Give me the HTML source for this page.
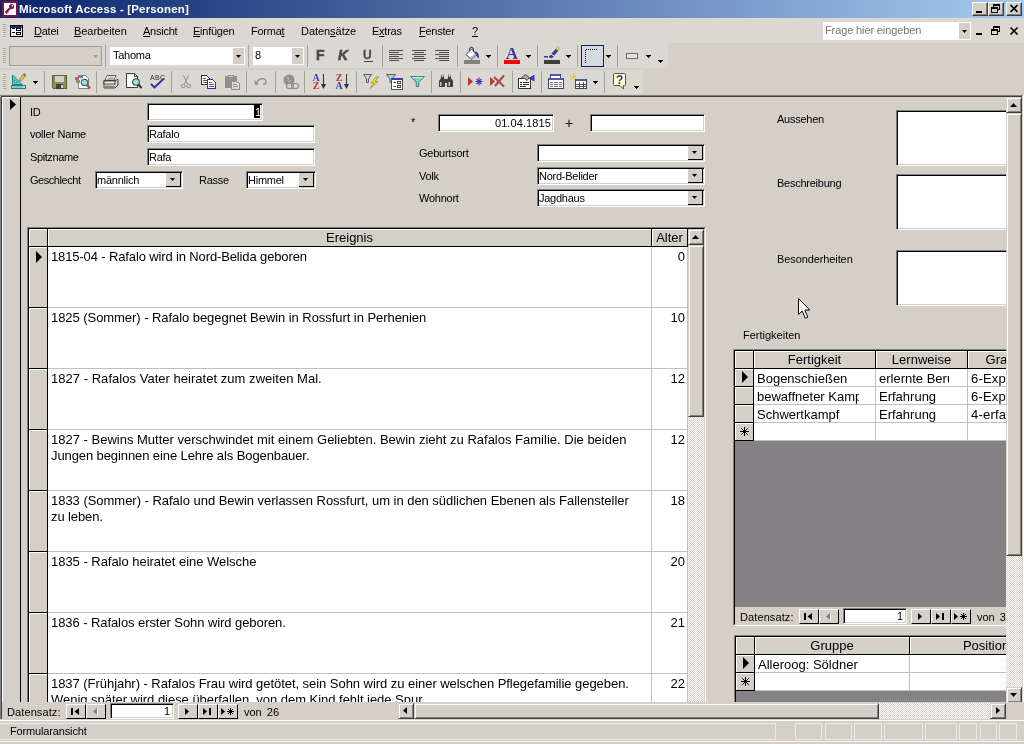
<!DOCTYPE html><html lang="de"><head><meta charset="utf-8"><title>Microsoft Access - [Personen]</title><style>
*{box-sizing:border-box;margin:0;padding:0}
html,body{width:1024px;height:744px;overflow:hidden;background:#d4d0c8}
body{position:relative;font-family:"Liberation Sans","DejaVu Sans",sans-serif;font-size:11px;color:#000;letter-spacing:-0.25px}
.a{position:absolute}
.t{position:absolute;white-space:nowrap;line-height:13px;height:13px}
.ar{font-size:13px;letter-spacing:0;line-height:15px;height:15px}
.sunk{position:absolute;background:#fff;border:1px solid;border-color:#808080 #fff #fff #808080;box-shadow:inset 1px 1px 0 #000,inset -1px -1px 0 #d4d0c8}
.sunk1{position:absolute;background:#fff;border:1px solid;border-color:#808080 #fff #fff #808080}
.btn{position:absolute;background:#d4d0c8;border:1px solid;border-color:#fff #404040 #404040 #fff;box-shadow:inset -1px -1px 0 #808080}
.cbtn{position:absolute;background:#d4d0c8;border-right:1px solid #000;border-bottom:1px solid #000}
.nbtn{position:absolute;background:#d4d0c8;border:1px solid;border-color:#fff #000 #000 #fff}
.sbtn{position:absolute;background:#d4d0c8;border:1px solid;border-color:#d4d0c8 #404040 #404040 #d4d0c8;box-shadow:inset 1px 1px 0 #fff,inset -1px -1px 0 #808080}
.chk{position:absolute;background:repeating-conic-gradient(#fff 0 25%,#d4d0c8 0 50%) 0 0/2px 2px}
.sep{position:absolute;width:2px;border-left:1px solid #808080;border-right:1px solid #fff}
.hdr{position:absolute;background:#d4d0c8;text-align:center;white-space:nowrap;overflow:hidden;padding-top:1px}
.u{text-decoration:underline}
svg{position:absolute;overflow:visible}
</style></head><body><div id="w" style="position:absolute;left:0;top:0;width:1024px;height:744px;will-change:transform">
<div class="a" style="left:0px;top:0px;width:1024px;height:18px;background:linear-gradient(90deg,#0a246a,#a6caf0)"></div>
<svg style="left:2px;top:1px" width="16" height="16" viewBox="0 0 16 16"><rect width="16" height="16" fill="#7a1246"/><rect x="2" y="2" width="12" height="12" fill="#fff"/><circle cx="9.6" cy="5.6" r="2.6" fill="#8a1450"/><circle cx="10.4" cy="4.8" r="0.8" fill="#fff"/><path d="M8 7.2 L3.6 11.6" stroke="#8a1450" stroke-width="2.2" fill="none"/><path d="M5.2 10.4 L6.4 11.6 M3.8 11.6 L5 12.6" stroke="#8a1450" stroke-width="1.2" fill="none"/></svg>
<div class="t " style="left:19px;top:2px;color:#fff;font-weight:bold;font-size:11.5px;letter-spacing:0.17px;line-height:14px;height:14px">Microsoft Access - [Personen]</div>
<div class="btn" style="left:972px;top:2px;width:16px;height:14px;"></div>
<div class="a" style="left:976px;top:11px;width:6px;height:2px;background:#000"></div>
<div class="btn" style="left:988px;top:2px;width:16px;height:14px;"></div>
<svg style="left:991px;top:4px" width="10" height="10" viewBox="0 0 10 10" shape-rendering="crispEdges"><path d="M2.5 3V0.5H8.5V5.5H6" fill="none" stroke="#000"/><path d="M2 1H9" stroke="#000"/><rect x="0.5" y="3.5" width="6" height="5" fill="none" stroke="#000"/><path d="M0 4H7" stroke="#000"/></svg>
<div class="btn" style="left:1006px;top:2px;width:16px;height:14px;"></div>
<svg style="left:1010px;top:5px" width="8" height="7" viewBox="0 0 8 7"><path d="M0.5 0 L7.5 7 M7.5 0 L0.5 7" stroke="#000" stroke-width="1.7"/></svg>
<div class="a" style="left:0px;top:18px;width:1024px;height:25px;background:#dbd8d1"></div>
<div class="a" style="left:3px;top:24px;width:3px;height:14px;background:repeating-linear-gradient(180deg,#a8a49c 0 1px,#e6e3dd 1px 2px)"></div>
<svg style="left:10px;top:25px" width="13" height="12" viewBox="0 0 13 12" shape-rendering="crispEdges"><rect x="0.5" y="0.5" width="12" height="11" fill="#f0f0f0" stroke="#000"/><rect x="1" y="1" width="11" height="2" fill="#1a2a80"/><rect x="2" y="3" width="3" height="1" fill="#000"/><rect x="2" y="7" width="3" height="1" fill="#000"/><rect x="6.5" y="3.5" width="4" height="2" fill="#fff" stroke="#000"/><rect x="6.5" y="7.5" width="4" height="2" fill="#fff" stroke="#000"/></svg>
<div class="t " style="left:34px;top:25px;"><span class="u">D</span>atei</div>
<div class="t " style="left:74px;top:25px;"><span style="letter-spacing:-0.05px"><span class="u">B</span>earbeiten</span></div>
<div class="t " style="left:143px;top:25px;"><span class="u">A</span>nsicht</div>
<div class="t " style="left:193px;top:25px;"><span class="u">E</span>infügen</div>
<div class="t " style="left:251px;top:25px;">Forma<span class="u">t</span></div>
<div class="t " style="left:301px;top:25px;"><span style="letter-spacing:-0.05px">Daten<span class="u">s</span>ätze</span></div>
<div class="t " style="left:372px;top:25px;">E<span class="u">x</span>tras</div>
<div class="t " style="left:419px;top:25px;"><span class="u">F</span>enster</div>
<div class="t " style="left:472px;top:25px;"><span class="u">?</span></div>
<div class="a" style="left:823px;top:22px;width:148px;height:18px;background:#fff"></div>
<div class="t " style="left:825px;top:24px;color:#777;letter-spacing:-0.12px">Frage hier eingeben</div>
<div class="a" style="left:959px;top:23px;width:11px;height:16px;background:#d4d0c8"></div>
<svg style="left:962px;top:30px" width="5" height="5"><polygon points="0,0 5,0 2.5,3" fill="#000"/></svg>
<div class="a" style="left:976px;top:33px;width:6px;height:2px;background:#000"></div>
<svg style="left:991px;top:26px" width="10" height="10" viewBox="0 0 10 10" shape-rendering="crispEdges"><path d="M2.5 3V0.5H8.5V5.5H6" fill="none" stroke="#000"/><path d="M2 1H9" stroke="#000"/><rect x="0.5" y="3.5" width="6" height="5" fill="none" stroke="#000"/><path d="M0 4H7" stroke="#000"/></svg>
<svg style="left:1010px;top:27px" width="8" height="8" viewBox="0 0 8 8"><path d="M0.5 0.5 L7.5 7.5 M7.5 0.5 L0.5 7.5" stroke="#000" stroke-width="1.7"/></svg>
<div class="a" style="left:0px;top:43px;width:668px;height:25px;background:#dbd8d1"></div>
<div class="a" style="left:0px;top:70px;width:643px;height:24px;background:#dbd8d1"></div>
<div class="a" style="left:3px;top:48px;width:3px;height:15px;background:repeating-linear-gradient(180deg,#a8a49c 0 1px,#e6e3dd 1px 2px)"></div>
<div class="a" style="left:3px;top:74px;width:3px;height:15px;background:repeating-linear-gradient(180deg,#a8a49c 0 1px,#e6e3dd 1px 2px)"></div>
<div class="a" style="left:9px;top:46px;width:93px;height:20px;background:#d4d0c8;border:1px solid #9e9c96"></div>
<svg style="left:93px;top:55px" width="5" height="5"><polygon points="0,0 5,0 2.5,3" fill="#9d9a93"/></svg>
<div class="a" style="left:110px;top:47px;width:135px;height:18px;background:#fff"></div>
<div class="t " style="left:113px;top:49px;">Tahoma</div>
<div class="a" style="left:233px;top:48px;width:11px;height:16px;background:#d4d0c8"></div>
<svg style="left:236px;top:55px" width="5" height="5"><polygon points="0,0 5,0 2.5,3" fill="#000"/></svg>
<div class="a" style="left:253px;top:47px;width:51px;height:18px;background:#fff"></div>
<div class="t " style="left:255px;top:49px;">8</div>
<div class="a" style="left:292px;top:48px;width:11px;height:16px;background:#d4d0c8"></div>
<svg style="left:295px;top:55px" width="5" height="5"><polygon points="0,0 5,0 2.5,3" fill="#000"/></svg>
<div class="a" style="left:105px;top:45px;width:1px;height:22px;background:#a6a398"></div>
<div class="a" style="left:248px;top:45px;width:1px;height:22px;background:#a6a398"></div>
<div class="a" style="left:307px;top:45px;width:1px;height:22px;background:#a6a398"></div>
<div class="a" style="left:382px;top:45px;width:1px;height:22px;background:#a6a398"></div>
<div class="a" style="left:457px;top:45px;width:1px;height:22px;background:#a6a398"></div>
<div class="a" style="left:497px;top:45px;width:1px;height:22px;background:#a6a398"></div>
<div class="a" style="left:537px;top:45px;width:1px;height:22px;background:#a6a398"></div>
<div class="a" style="left:577px;top:45px;width:1px;height:22px;background:#a6a398"></div>
<div class="a" style="left:617px;top:45px;width:1px;height:22px;background:#a6a398"></div>
<div class="a" style="left:44px;top:71px;width:1px;height:22px;background:#a6a398"></div>
<div class="a" style="left:96px;top:71px;width:1px;height:22px;background:#a6a398"></div>
<div class="a" style="left:171px;top:71px;width:1px;height:22px;background:#a6a398"></div>
<div class="a" style="left:246px;top:71px;width:1px;height:22px;background:#a6a398"></div>
<div class="a" style="left:275px;top:71px;width:1px;height:22px;background:#a6a398"></div>
<div class="a" style="left:304px;top:71px;width:1px;height:22px;background:#a6a398"></div>
<div class="a" style="left:356px;top:71px;width:1px;height:22px;background:#a6a398"></div>
<div class="a" style="left:431px;top:71px;width:1px;height:22px;background:#a6a398"></div>
<div class="a" style="left:460px;top:71px;width:1px;height:22px;background:#a6a398"></div>
<div class="a" style="left:512px;top:71px;width:1px;height:22px;background:#a6a398"></div>
<div class="a" style="left:541px;top:71px;width:1px;height:22px;background:#a6a398"></div>
<div class="a" style="left:604px;top:71px;width:1px;height:22px;background:#a6a398"></div>
<div class="t" style="left:316px;top:48px;letter-spacing:0;font-weight:bold;font-size:14px;line-height:15px;height:15px;color:#4d4d4d;-webkit-text-stroke:0.6px #4d4d4d">F</div>
<div class="t" style="left:338px;top:48px;letter-spacing:0;font-weight:bold;font-style:italic;font-size:14px;line-height:15px;height:15px;color:#4d4d4d;-webkit-text-stroke:0.6px #4d4d4d">K</div>
<div class="t" style="left:363px;top:48px;letter-spacing:0;font-weight:bold;font-size:12px;line-height:15px;height:15px;color:#4d4d4d;-webkit-text-stroke:0.3px #4d4d4d">U</div>
<svg style="left:364px;top:61px" width="9" height="1" viewBox="0 0 9 1" shape-rendering="crispEdges"><rect width="9" height="1" fill="#4d4d4d"/></svg>
<svg style="left:389px;top:50px" width="14" height="11" viewBox="0 0 14 11" shape-rendering="crispEdges"><rect x="0" y="0" width="14" height="1" fill="#4d4d4d"/><rect x="0" y="2" width="10" height="1" fill="#4d4d4d"/><rect x="0" y="4" width="14" height="1" fill="#4d4d4d"/><rect x="0" y="6" width="10" height="1" fill="#4d4d4d"/><rect x="0" y="8" width="14" height="1" fill="#4d4d4d"/><rect x="0" y="10" width="10" height="1" fill="#4d4d4d"/></svg>
<svg style="left:412px;top:50px" width="14" height="11" viewBox="0 0 14 11" shape-rendering="crispEdges"><rect x="0" y="0" width="14" height="1" fill="#4d4d4d"/><rect x="2" y="2" width="10" height="1" fill="#4d4d4d"/><rect x="0" y="4" width="14" height="1" fill="#4d4d4d"/><rect x="2" y="6" width="10" height="1" fill="#4d4d4d"/><rect x="0" y="8" width="14" height="1" fill="#4d4d4d"/><rect x="2" y="10" width="10" height="1" fill="#4d4d4d"/></svg>
<svg style="left:435px;top:50px" width="14" height="11" viewBox="0 0 14 11" shape-rendering="crispEdges"><rect x="0" y="0" width="14" height="1" fill="#4d4d4d"/><rect x="4" y="2" width="10" height="1" fill="#4d4d4d"/><rect x="0" y="4" width="14" height="1" fill="#4d4d4d"/><rect x="4" y="6" width="10" height="1" fill="#4d4d4d"/><rect x="0" y="8" width="14" height="1" fill="#4d4d4d"/><rect x="4" y="10" width="10" height="1" fill="#4d4d4d"/></svg>
<svg style="left:464px;top:47px" width="16" height="17" viewBox="0 0 16 17"><rect x="0" y="13" width="16" height="4" fill="#808080"/>
<path d="M2 7.5 L7.5 2 L13 7.5 L7.5 12.5 Z" fill="#fff" stroke="#404040" stroke-width="1"/>
<path d="M7.5 12.5 L13 7.5 L10 7.5 L6 11Z" fill="#b0b0b0"/>
<path d="M5.5 4 C5 -1 10 -1 9.5 5" fill="none" stroke="#3a3aa0" stroke-width="1.2"/>
<path d="M10.5 4.5 C14.5 4.5 15 8 15 11.5 C12.5 10.5 12.5 7.5 11 7Z" fill="#3a3aa0"/></svg>
<svg style="left:486px;top:55px" width="5" height="3" viewBox="0 0 5 3" shape-rendering="crispEdges"><path d="M0 0H5V1H4V2H3V3H2V2H1V1H0Z" fill="#000"/></svg>
<div class="t" style="left:504px;top:45px;width:16px;text-align:center;letter-spacing:0;font-family:'Liberation Serif',serif;font-weight:bold;font-size:17px;line-height:17px;height:17px;color:#3a3aa0">A</div>
<svg style="left:504px;top:60px" width="16" height="4" viewBox="0 0 16 4" shape-rendering="crispEdges"><rect width="16" height="4" fill="#ff0000"/></svg>
<svg style="left:526px;top:55px" width="5" height="3" viewBox="0 0 5 3" shape-rendering="crispEdges"><path d="M0 0H5V1H4V2H3V3H2V2H1V1H0Z" fill="#000"/></svg>
<svg style="left:544px;top:46px" width="16" height="18" viewBox="0 0 16 18"><rect x="0" y="14" width="16" height="4" fill="#404040"/>
<path d="M5 11 L12 3 L14 4.5 L8 12 Z" fill="#3a3aa0" stroke="#26266e" stroke-width="0.6"/>
<path d="M12 3 L14 0.5 L15.5 2 L14 4.5Z" fill="#f0e040" stroke="#8a8420" stroke-width="0.5"/>
<path d="M7 8 L10 10" stroke="#fff" stroke-width="1"/>
<rect x="0" y="10" width="4" height="1.5" fill="#3a3aa0"/></svg>
<svg style="left:566px;top:55px" width="5" height="3" viewBox="0 0 5 3" shape-rendering="crispEdges"><path d="M0 0H5V1H4V2H3V3H2V2H1V1H0Z" fill="#000"/></svg>
<svg style="left:581px;top:45px" width="23" height="22" viewBox="0 0 23 22" shape-rendering="crispEdges"><rect x="0.5" y="0.5" width="22" height="21" fill="#d6d8e2" stroke="#0a246a"/>
<path d="M4.5 4.5H17" stroke="#000" stroke-dasharray="1 1"/><path d="M4.5 4.5V18" stroke="#000" stroke-dasharray="1 1"/></svg>
<svg style="left:606px;top:55px" width="5" height="3" viewBox="0 0 5 3" shape-rendering="crispEdges"><path d="M0 0H5V1H4V2H3V3H2V2H1V1H0Z" fill="#000"/></svg>
<svg style="left:626px;top:53px" width="12" height="6" viewBox="0 0 12 6" shape-rendering="crispEdges"><rect x="0.5" y="0.5" width="11" height="5" fill="#e4e2dc" stroke="#707070"/></svg>
<svg style="left:646px;top:55px" width="5" height="3" viewBox="0 0 5 3" shape-rendering="crispEdges"><path d="M0 0H5V1H4V2H3V3H2V2H1V1H0Z" fill="#000"/></svg>
<svg style="left:658px;top:60px" width="5" height="3" viewBox="0 0 5 3" shape-rendering="crispEdges"><path d="M0 0H5V1H4V2H3V3H2V2H1V1H0Z" fill="#000"/></svg>
<svg style="left:11px;top:73px" width="16" height="16" viewBox="0 0 16 16"><path d="M1.5 11.5 L1.5 2 L11 11.5 Z" fill="#58d0d0" stroke="#188080"/>
<path d="M3.5 9.5 L3.5 6.5 L6.5 9.5 Z" fill="#dbd8d1" stroke="#208888" stroke-width="0.7"/>
<rect x="0.5" y="12.5" width="14" height="3" fill="#b8e4e4" stroke="#188080"/>
<path d="M3 13v2M5 13v2M7 13v2M9 13v2M11 13v2" stroke="#208888" stroke-width="0.6"/>
<path d="M8 7 L12 1.5 L14.5 3 L10 8 Z" fill="#e8c840" stroke="#806820" stroke-width="0.7"/>
<path d="M12 1.5 L13 0.3 L15.2 1.8 L14.5 3Z" fill="#606060"/></svg>
<svg style="left:33px;top:81px" width="5" height="3" viewBox="0 0 5 3" shape-rendering="crispEdges"><path d="M0 0H5V1H4V2H3V3H2V2H1V1H0Z" fill="#000"/></svg>
<svg style="left:52px;top:75px" width="15" height="14" viewBox="0 0 15 14" shape-rendering="crispEdges"><path d="M0.5 0.5H14.5V13.5H1.5L0.5 12.5Z" fill="#8a9050" stroke="#5a6030"/>
<rect x="3" y="1" width="9" height="6" fill="#d4d0c8"/>
<rect x="4" y="9" width="7" height="4.5" fill="#404040"/><rect x="8.5" y="10" width="2" height="3" fill="#d4d0c8"/></svg>
<svg style="left:75px;top:74px" width="16" height="17" viewBox="0 0 16 17" shape-rendering="crispEdges"><path d="M3.5 1.5H10.5L13.5 4.5V14.5H3.5Z" fill="#fff" stroke="#808080"/>
<rect x="0" y="3" width="4" height="3" fill="#c06070"/><rect x="4" y="1" width="4" height="3" fill="#6080c0"/><rect x="1" y="6" width="4" height="3" fill="#909060"/><rect x="5" y="4" width="3" height="3" fill="#e8e0a0"/>
<circle cx="9.5" cy="8.5" r="3.2" fill="#a0e0e0" stroke="#406080" stroke-width="1.2" shape-rendering="auto"/>
<path d="M12 11 L15 14.5" stroke="#d03030" stroke-width="2" shape-rendering="auto"/></svg>
<svg style="left:103px;top:75px" width="16" height="14" viewBox="0 0 16 14"><path d="M4 0.5H13L11 5H2Z" fill="#fff" stroke="#606060"/>
<path d="M5 2H11M4.5 3.5H10" stroke="#808080" stroke-width="0.7"/>
<path d="M1 5.5H12L15 4.5V10L12 13H1Z" fill="#d4d0c8" stroke="#404040"/>
<rect x="1" y="6" width="11" height="3" fill="#f4f4f4" stroke="#404040"/>
<rect x="2" y="9.5" width="9" height="1" fill="#c8c040"/>
<rect x="1.5" y="11" width="10" height="2" fill="#808080"/></svg>
<svg style="left:126px;top:73px" width="17" height="17" viewBox="0 0 17 17" shape-rendering="crispEdges"><path d="M0.5 0.5H8.5L11.5 3.5V14.5H0.5Z" fill="#fff" stroke="#404040"/>
<path d="M8.5 0.5V3.5H11.5" fill="none" stroke="#404040"/>
<circle cx="10" cy="9" r="3.3" fill="#a0e0d8" stroke="#404040" stroke-width="1.1" shape-rendering="auto"/>
<path d="M12.5 11.5 L15.5 15" stroke="#303030" stroke-width="2" shape-rendering="auto"/></svg>
<div class="t" style="left:150px;top:74px;letter-spacing:0;font-size:7px;font-weight:normal;line-height:8px;height:8px;color:#303030;letter-spacing:0.3px">ABC</div>
<svg style="left:150px;top:78px" width="15" height="11" viewBox="0 0 15 11"><path d="M1 6 L4.5 9.5 L14 0.5" fill="none" stroke="#3030a0" stroke-width="1.8"/></svg>
<svg style="left:181px;top:75px" width="10" height="14" viewBox="0 0 10 14"><path d="M2.5 0.5 L6.5 9 M7.5 0.5 L3.5 9" stroke="#909088" stroke-width="1" fill="none"/>
<circle cx="2.3" cy="11" r="1.8" fill="none" stroke="#909088"/><circle cx="7.7" cy="11" r="1.8" fill="none" stroke="#909088"/></svg>
<svg style="left:201px;top:75px" width="16" height="14" viewBox="0 0 16 14" shape-rendering="crispEdges"><path d="M0.5 0.5H5.5L8.5 3.5V9.5H0.5Z" fill="#fff" stroke="#303030"/>
<path d="M2 3H5M2 5H7M2 7H7" stroke="#303030" stroke-width="0.8"/>
<path d="M6.5 4.5H11.5L14.5 7.5V13.5H6.5Z" fill="#fff" stroke="#3030a0"/>
<path d="M8 7H11M8 9H13M8 11H13" stroke="#3030a0" stroke-width="0.8"/></svg>
<svg style="left:224px;top:74px" width="16" height="16" viewBox="0 0 16 16" shape-rendering="crispEdges"><rect x="1" y="2" width="12" height="12" rx="1" fill="#909088"/>
<rect x="4" y="0.5" width="6" height="3" fill="#909088"/><rect x="5" y="2" width="4" height="1" fill="#d4d0c8"/>
<path d="M7.5 7.5H12.5L15.5 9.5V15.5H7.5Z" fill="#dbd8d1" stroke="#909088"/>
<path d="M9 10.5H13M9 12.5H14" stroke="#909088" stroke-width="0.9"/></svg>
<svg style="left:254px;top:77px" width="14" height="9" viewBox="0 0 14 9"><path d="M3 6.5 C3 1 12 0 12 4.5 C12 6.5 10.5 7.5 9 7.5" fill="none" stroke="#909088" stroke-width="1.3"/>
<path d="M0.5 3 L5 7.5 L0.8 8Z" fill="#909088"/></svg>
<svg style="left:282px;top:74px" width="17" height="16" viewBox="0 0 17 16"><circle cx="7" cy="6" r="5.5" fill="#909088"/>
<path d="M4 3 C6 2 7 4 6 6 C5 8 8 8 9 6" fill="none" stroke="#c8c4bc" stroke-width="1"/>
<rect x="4.5" y="9.5" width="7" height="5" rx="2.5" fill="#d4d0c8" stroke="#909088" stroke-width="1.2"/>
<rect x="9.5" y="9.5" width="7" height="5" rx="2.5" fill="none" stroke="#909088" stroke-width="1.2"/></svg>
<div class="t" style="left:312px;top:73px;width:8px;text-align:center;letter-spacing:0;font-family:'Liberation Serif',serif;font-weight:bold;font-size:10px;line-height:9px;height:9px;color:#3838b0">A</div>
<div class="t" style="left:312px;top:81px;width:8px;text-align:center;letter-spacing:0;font-family:'Liberation Serif',serif;font-weight:bold;font-size:10px;line-height:9px;height:9px;color:#c03030">Z</div>
<svg style="left:321px;top:74px" width="5" height="15" viewBox="0 0 5 15"><rect x="2" y="0" width="1" height="12" fill="#303030"/><path d="M0 10H5L2.5 15Z" fill="#303030"/></svg>
<div class="t" style="left:335px;top:73px;width:8px;text-align:center;letter-spacing:0;font-family:'Liberation Serif',serif;font-weight:bold;font-size:10px;line-height:9px;height:9px;color:#c03030">Z</div>
<div class="t" style="left:335px;top:81px;width:8px;text-align:center;letter-spacing:0;font-family:'Liberation Serif',serif;font-weight:bold;font-size:10px;line-height:9px;height:9px;color:#3838b0">A</div>
<svg style="left:344px;top:74px" width="5" height="15" viewBox="0 0 5 15"><rect x="2" y="0" width="1" height="12" fill="#303030"/><path d="M0 10H5L2.5 15Z" fill="#303030"/></svg>
<svg style="left:363px;top:74px" width="16" height="15" viewBox="0 0 16 15"><path d="M0.5 0.5H8.5L5.5 4.95V8.5H3.5V4.95Z" fill="#a8d8d8" stroke="#505050" stroke-width="0.9"/><path d="M13 3 L8 9 H11 L7 14.5 L15 7.5 H12 L15.5 3Z" fill="#f0e820" stroke="#807810" stroke-width="0.6"/></svg>
<svg style="left:386px;top:74px" width="17" height="16" viewBox="0 0 17 16"><path d="M0.5 0.5H9.5L6.0 4.95V8.5H4.0V4.95Z" fill="#a8d8d8" stroke="#505050" stroke-width="0.9"/><rect x="5.5" y="4.5" width="11" height="11" fill="#fff" stroke="#505050"/>
<rect x="6" y="4" width="10" height="2" fill="#3838b0"/>
<rect x="11.5" y="7.5" width="3" height="2" fill="none" stroke="#303030" stroke-width="0.9"/><rect x="11.5" y="11.5" width="3" height="2" fill="none" stroke="#303030" stroke-width="0.9"/>
<path d="M7.5 8.5H10M7.5 12.5H10" stroke="#303030" stroke-width="0.9"/></svg>
<svg style="left:410px;top:76px" width="15" height="11" viewBox="0 0 15 11"><path d="M0.5 0.5H14.5L8.8 6V10.5H6.2V6Z" fill="#80d0c8" stroke="#407070" stroke-width="0.9"/><path d="M2 1.5H13" stroke="#d8f4f0" stroke-width="1"/></svg>
<svg style="left:438px;top:75px" width="16" height="13" viewBox="0 0 16 13"><path d="M3 1H6V3L7 5V12H1V6L3 3Z" fill="#404040"/><path d="M10 1H13V3L15 6V12H9V5L10 3Z" fill="#404040"/>
<rect x="6.5" y="4" width="3" height="4" fill="#404040"/>
<rect x="2" y="7" width="1.5" height="4" fill="#c8c8c8"/><rect x="10.5" y="7" width="1.5" height="4" fill="#c8c8c8"/>
<rect x="3.5" y="0" width="2" height="2" fill="#fff" stroke="#404040" stroke-width="0.5"/><rect x="10.5" y="0" width="2" height="2" fill="#fff" stroke="#404040" stroke-width="0.5"/></svg>
<svg style="left:468px;top:77px" width="15" height="9" viewBox="0 0 15 9"><path d="M0 0L5 4.5L0 9Z" fill="#b83838"/><path d="M11 0.5V8.5M7.5 4.5H14.5M8.5 2L13.5 7M13.5 2L8.5 7" stroke="#3838c0" stroke-width="1.1"/></svg>
<svg style="left:490px;top:75px" width="15" height="12" viewBox="0 0 15 12"><path d="M0 2L5 6.5L0 11Z" fill="#b83838"/><path d="M4 2 L14 11.5 M14 0.5 L5 11" stroke="#a04848" stroke-width="2"/></svg>
<svg style="left:518px;top:74px" width="18" height="16" viewBox="0 0 18 16" shape-rendering="crispEdges"><rect x="0.5" y="4.5" width="12" height="10" fill="#fff" stroke="#303030"/>
<path d="M2 8.5H4M5 8.5H11M2 10.5H4M5 10.5H11M2 12.5H8" stroke="#303030" stroke-width="1"/>
<path d="M2.5 4.5 L7.5 0.5 L11.5 3.5 L9 6.5 L6.5 4.5Z" fill="#a8a8a8" stroke="#303030" stroke-width="0.8" shape-rendering="auto"/>
<path d="M12 3.2 L16.5 0.5 V7.5 L12 5.2Z" fill="#3838b0" shape-rendering="auto"/></svg>
<svg style="left:548px;top:73px" width="17" height="16" viewBox="0 0 17 16" shape-rendering="crispEdges"><rect x="2.5" y="1.5" width="10" height="7" fill="#fff" stroke="#404068"/><rect x="3" y="1" width="9" height="2" fill="#5858a8"/>
<rect x="0.5" y="5.5" width="15" height="10" fill="#fff" stroke="#404068"/><rect x="1" y="5" width="14" height="2" fill="#5858a8"/>
<path d="M2 9.5H5M6 9.5H10M11 9.5H14M2 11.5H5M6 11.5H10M11 11.5H14M2 13.5H5M6 13.5H10M11 13.5H14" stroke="#707070" stroke-width="1"/></svg>
<svg style="left:570px;top:73px" width="17" height="16" viewBox="0 0 17 16" shape-rendering="crispEdges"><path d="M3.5 0 V8 M0 4 H7 M1 1.5 L6 6.5 M6 1.5 L1 6.5" stroke="#e0d020" stroke-width="0.8" shape-rendering="auto"/>
<rect x="5.5" y="6.5" width="11" height="9" fill="#fff" stroke="#404068"/><rect x="6" y="6" width="10" height="2" fill="#5858a8"/>
<path d="M9.5 9V15M13 9V15M6 11.5H16M6 13.5H16" stroke="#404040" stroke-width="0.9"/></svg>
<svg style="left:593px;top:81px" width="5" height="3" viewBox="0 0 5 3" shape-rendering="crispEdges"><path d="M0 0H5V1H4V2H3V3H2V2H1V1H0Z" fill="#000"/></svg>
<svg style="left:613px;top:73px" width="14" height="17" viewBox="0 0 14 17" shape-rendering="crispEdges"><path d="M1.5 0.5H11.5Q12.5 0.5 12.5 1.5V11.5Q12.5 12.5 11.5 12.5H10.5L10.5 16L7 12.5H1.5Q0.5 12.5 0.5 11.5V1.5Q0.5 0.5 1.5 0.5Z" fill="#ffffd0" stroke="#505050" shape-rendering="auto"/></svg>
<div class="t" style="left:616px;top:74px;letter-spacing:0;font-weight:bold;font-size:12px;line-height:12px;height:12px;color:#30307a">?</div>
<svg style="left:634px;top:86px" width="5" height="3" viewBox="0 0 5 3" shape-rendering="crispEdges"><path d="M0 0H5V1H4V2H3V3H2V2H1V1H0Z" fill="#000"/></svg>
<div class="a" style="left:0px;top:95px;width:1023px;height:1px;background:#808080"></div>
<div class="a" style="left:1px;top:96px;width:1021px;height:1px;background:#404040"></div>
<div class="a" style="left:1023px;top:95px;width:1px;height:625px;background:#fff"></div>
<div class="a" style="left:0px;top:97px;width:21px;height:606px;background:#d4d0c8;border-left:1px solid #808080;border-right:1px solid #000"></div>
<div class="a" style="left:1px;top:97px;width:1px;height:606px;background:#404040"></div>
<div class="a" style="left:2px;top:97px;width:1px;height:606px;background:#fff"></div>
<div class="a" style="left:2px;top:97px;width:18px;height:1px;background:#fff"></div>
<svg style="left:10px;top:99px" width="11" height="11"><polygon points="0,0 6,5.5 0,11" fill="#000"/></svg>
<div class="t " style="left:30px;top:106px;">ID</div>
<div class="t " style="left:30px;top:128px;">voller Name</div>
<div class="t " style="left:30px;top:151px;letter-spacing:-0.4px">Spitzname</div>
<div class="t " style="left:30px;top:174px;letter-spacing:-0.45px">Geschlecht</div>
<div class="t " style="left:199px;top:174px;">Rasse</div>
<div class="sunk" style="left:147px;top:103px;width:116px;height:18px;"></div>
<div class="a" style="left:254px;top:105px;width:6px;height:13px;background:#000"></div>
<div class="t " style="left:255px;top:106px;color:#fff">1</div>
<div class="sunk" style="left:147px;top:125px;width:168px;height:18px;"><div class="t" style="left:1px;top:2px;">Rafalo</div></div>
<div class="sunk" style="left:147px;top:148px;width:168px;height:18px;"><div class="t" style="left:1px;top:2px;">Rafa</div></div>
<div class="sunk" style="left:95px;top:171px;width:88px;height:18px;"><div class="t" style="left:1px;top:2px;">männlich</div></div>
<div class="cbtn" style="left:166px;top:173px;width:15px;height:14px;"></div>
<svg style="left:170px;top:178px" width="5" height="5"><polygon points="0,0 5,0 2.5,3" fill="#000"/></svg>
<div class="sunk" style="left:246px;top:171px;width:70px;height:18px;"><div class="t" style="left:1px;top:2px;">Himmel</div></div>
<div class="cbtn" style="left:299px;top:173px;width:15px;height:14px;"></div>
<svg style="left:303px;top:178px" width="5" height="5"><polygon points="0,0 5,0 2.5,3" fill="#000"/></svg>
<div class="t " style="left:411px;top:116px;">*</div>
<div class="sunk" style="left:438px;top:114px;width:116px;height:18px;"><div class="t" style="left:1px;top:2px;right:2px;text-align:right;left:auto;letter-spacing:0.1px;">01.04.1815</div></div>
<div class="t " style="left:565px;top:115px;font-size:14px;line-height:16px;height:16px">+</div>
<div class="sunk" style="left:590px;top:114px;width:115px;height:18px;"></div>
<div class="t " style="left:419px;top:147px;">Geburtsort</div>
<div class="t " style="left:419px;top:170px;">Volk</div>
<div class="t " style="left:419px;top:192px;">Wohnort</div>
<div class="sunk" style="left:537px;top:144px;width:168px;height:18px;"></div>
<div class="cbtn" style="left:688px;top:146px;width:15px;height:14px;"></div>
<svg style="left:692px;top:151px" width="5" height="5"><polygon points="0,0 5,0 2.5,3" fill="#000"/></svg>
<div class="sunk" style="left:537px;top:167px;width:168px;height:18px;"><div class="t" style="left:1px;top:2px;">Nord-Belider</div></div>
<div class="cbtn" style="left:688px;top:169px;width:15px;height:14px;"></div>
<svg style="left:692px;top:174px" width="5" height="5"><polygon points="0,0 5,0 2.5,3" fill="#000"/></svg>
<div class="sunk" style="left:537px;top:189px;width:168px;height:18px;"><div class="t" style="left:1px;top:2px;">Jagdhaus</div></div>
<div class="cbtn" style="left:688px;top:191px;width:15px;height:14px;"></div>
<svg style="left:692px;top:196px" width="5" height="5"><polygon points="0,0 5,0 2.5,3" fill="#000"/></svg>
<div class="a" style="left:27px;top:227px;width:679px;height:475px;overflow:hidden">
<div class="a" style="left:0px;top:0px;width:679px;height:500px;border:1px solid;border-color:#808080 #fff #fff #808080;background:#fff"></div>
<div class="a" style="left:1px;top:1px;width:677px;height:500px;border:1px solid;border-color:#000 #d4d0c8 #d4d0c8 #000"></div>
<div class="a" style="left:2px;top:2px;width:18px;height:17px;background:#d4d0c8;border-top:1px solid #fff;border-left:1px solid #fff"></div>
<div class="a" style="left:20px;top:2px;width:1px;height:480px;background:#000"></div>
<div class="a" style="left:2px;top:19px;width:659px;height:1px;background:#000"></div>
<div class="hdr ar" style="left:21px;top:2px;width:603px;height:17px;">Ereignis</div>
<div class="a" style="left:21px;top:2px;width:603px;height:17px;border-top:1px solid #fff;border-left:1px solid #fff"></div>
<div class="a" style="left:624px;top:2px;width:1px;height:17px;background:#000"></div>
<div class="hdr ar" style="left:625px;top:2px;width:35px;height:17px;">Alter</div>
<div class="a" style="left:625px;top:2px;width:35px;height:17px;border-top:1px solid #fff;border-left:1px solid #fff"></div>
<div class="a" style="left:660px;top:2px;width:1px;height:17px;background:#000"></div>
<div class="a" style="left:624px;top:20px;width:1px;height:460px;background:#c0c0c0"></div>
<div class="a" style="left:660px;top:20px;width:1px;height:460px;background:#c0c0c0"></div>
<div class="a" style="left:2px;top:20px;width:18px;height:60px;background:#d4d0c8;border-top:1px solid #fff;border-left:1px solid #fff"></div>
<div class="a" style="left:2px;top:80px;width:18px;height:1px;background:#000"></div>
<div class="a" style="left:21px;top:80px;width:639px;height:1px;background:#c0c0c0"></div>
<div class="a ar" style="left:24px;top:22px;white-space:nowrap;line-height:16px;height:16px;letter-spacing:-0.131px">1815-04 - Rafalo wird in Nord-Belida geboren</div>
<div class="a ar" style="left:625px;top:22px;width:33px;text-align:right;line-height:16px;height:16px">0</div>
<div class="a" style="left:2px;top:81px;width:18px;height:60px;background:#d4d0c8;border-top:1px solid #fff;border-left:1px solid #fff"></div>
<div class="a" style="left:2px;top:141px;width:18px;height:1px;background:#000"></div>
<div class="a" style="left:21px;top:141px;width:639px;height:1px;background:#c0c0c0"></div>
<div class="a ar" style="left:24px;top:83px;white-space:nowrap;line-height:16px;height:16px;letter-spacing:-0.056px">1825 (Sommer) - Rafalo begegnet Bewin in Rossfurt in Perhenien</div>
<div class="a ar" style="left:625px;top:83px;width:33px;text-align:right;line-height:16px;height:16px">10</div>
<div class="a" style="left:2px;top:142px;width:18px;height:60px;background:#d4d0c8;border-top:1px solid #fff;border-left:1px solid #fff"></div>
<div class="a" style="left:2px;top:202px;width:18px;height:1px;background:#000"></div>
<div class="a" style="left:21px;top:202px;width:639px;height:1px;background:#c0c0c0"></div>
<div class="a ar" style="left:24px;top:144px;white-space:nowrap;line-height:16px;height:16px;letter-spacing:0.032px">1827 - Rafalos Vater heiratet zum zweiten Mal.</div>
<div class="a ar" style="left:625px;top:144px;width:33px;text-align:right;line-height:16px;height:16px">12</div>
<div class="a" style="left:2px;top:203px;width:18px;height:60px;background:#d4d0c8;border-top:1px solid #fff;border-left:1px solid #fff"></div>
<div class="a" style="left:2px;top:263px;width:18px;height:1px;background:#000"></div>
<div class="a" style="left:21px;top:263px;width:639px;height:1px;background:#c0c0c0"></div>
<div class="a ar" style="left:24px;top:205px;white-space:nowrap;line-height:16px;height:16px;letter-spacing:0.003px">1827 - Bewins Mutter verschwindet mit einem Geliebten. Bewin zieht zu Rafalos Familie. Die beiden</div>
<div class="a ar" style="left:24px;top:221px;white-space:nowrap;line-height:16px;height:16px;letter-spacing:-0.095px">Jungen beginnen eine Lehre als Bogenbauer.</div>
<div class="a ar" style="left:625px;top:205px;width:33px;text-align:right;line-height:16px;height:16px">12</div>
<div class="a" style="left:2px;top:264px;width:18px;height:60px;background:#d4d0c8;border-top:1px solid #fff;border-left:1px solid #fff"></div>
<div class="a" style="left:2px;top:324px;width:18px;height:1px;background:#000"></div>
<div class="a" style="left:21px;top:324px;width:639px;height:1px;background:#c0c0c0"></div>
<div class="a ar" style="left:24px;top:266px;white-space:nowrap;line-height:16px;height:16px;letter-spacing:-0.025px">1833 (Sommer) - Rafalo und Bewin verlassen Rossfurt, um in den südlichen Ebenen als Fallensteller</div>
<div class="a ar" style="left:24px;top:282px;white-space:nowrap;line-height:16px;height:16px;letter-spacing:-0.11px">zu leben.</div>
<div class="a ar" style="left:625px;top:266px;width:33px;text-align:right;line-height:16px;height:16px">18</div>
<div class="a" style="left:2px;top:325px;width:18px;height:60px;background:#d4d0c8;border-top:1px solid #fff;border-left:1px solid #fff"></div>
<div class="a" style="left:2px;top:385px;width:18px;height:1px;background:#000"></div>
<div class="a" style="left:21px;top:385px;width:639px;height:1px;background:#c0c0c0"></div>
<div class="a ar" style="left:24px;top:327px;white-space:nowrap;line-height:16px;height:16px;letter-spacing:-0.029px">1835 - Rafalo heiratet eine Welsche</div>
<div class="a ar" style="left:625px;top:327px;width:33px;text-align:right;line-height:16px;height:16px">20</div>
<div class="a" style="left:2px;top:386px;width:18px;height:60px;background:#d4d0c8;border-top:1px solid #fff;border-left:1px solid #fff"></div>
<div class="a" style="left:2px;top:446px;width:18px;height:1px;background:#000"></div>
<div class="a" style="left:21px;top:446px;width:639px;height:1px;background:#c0c0c0"></div>
<div class="a ar" style="left:24px;top:388px;white-space:nowrap;line-height:16px;height:16px;letter-spacing:-0.075px">1836 - Rafalos erster Sohn wird geboren.</div>
<div class="a ar" style="left:625px;top:388px;width:33px;text-align:right;line-height:16px;height:16px">21</div>
<div class="a" style="left:2px;top:447px;width:18px;height:60px;background:#d4d0c8;border-top:1px solid #fff;border-left:1px solid #fff"></div>
<div class="a" style="left:2px;top:507px;width:18px;height:1px;background:#000"></div>
<div class="a" style="left:21px;top:507px;width:639px;height:1px;background:#c0c0c0"></div>
<div class="a ar" style="left:24px;top:449px;white-space:nowrap;line-height:16px;height:16px;letter-spacing:-0.045px">1837 (Frühjahr) - Rafalos Frau wird getötet, sein Sohn wird zu einer welschen Pflegefamilie gegeben.</div>
<div class="a ar" style="left:24px;top:465px;white-space:nowrap;line-height:16px;height:16px;letter-spacing:-0.03px">Wenig später wird diese überfallen, von dem Kind fehlt jede Spur.</div>
<div class="a ar" style="left:625px;top:449px;width:33px;text-align:right;line-height:16px;height:16px">22</div>
<svg style="left:9px;top:24px" width="12" height="12"><polygon points="0,0 6,6.0 0,12" fill="#000"/></svg>
<div class="chk" style="left:661px;top:2px;width:16px;height:480px;"></div>
<div class="sbtn" style="left:661px;top:2px;width:16px;height:16px;"></div>
<svg style="left:665px;top:8px" width="7" height="7"><polygon points="0,4 7,4 3.5,0" fill="#000"/></svg>
<div class="sbtn" style="left:661px;top:18px;width:16px;height:172px;"></div>
</div>
<div class="a" style="left:706px;top:97px;width:300px;height:605px;overflow:hidden">
<div class="t" style="left:71px;top:16px">Aussehen</div>
<div class="t" style="left:71px;top:80px">Beschreibung</div>
<div class="t" style="left:71px;top:156px;letter-spacing:-0.1px">Besonderheiten</div>
<div class="t" style="left:37px;top:232px;letter-spacing:0">Fertigkeiten</div>
<div class="sunk" style="left:190px;top:13px;width:140px;height:56px;"></div>
<div class="sunk" style="left:190px;top:77px;width:140px;height:56px;"></div>
<div class="sunk" style="left:190px;top:153px;width:140px;height:56px;"></div>
<div class="a" style="left:27px;top:252px;width:310px;height:277px;border:1px solid;border-color:#808080 #fff #fff #808080;background:#848284"></div>
<div class="a" style="left:28px;top:253px;width:308px;height:275px;border:1px solid;border-color:#000 #d4d0c8 #d4d0c8 #000"></div>
<div class="a" style="left:29px;top:254px;width:18px;height:17px;background:#d4d0c8;border-top:1px solid #fff;border-left:1px solid #fff"></div>
<div class="a" style="left:47px;top:254px;width:1px;height:90px;background:#000"></div>
<div class="a" style="left:29px;top:271px;width:400px;height:1px;background:#000"></div>
<div class="hdr ar" style="left:48px;top:254px;width:121px;height:17px;">Fertigkeit</div>
<div class="a" style="left:48px;top:254px;width:121px;height:17px;border-top:1px solid #fff;border-left:1px solid #fff"></div>
<div class="a" style="left:169px;top:254px;width:1px;height:17px;background:#000"></div>
<div class="hdr ar" style="left:170px;top:254px;width:91px;height:17px;">Lernweise</div>
<div class="a" style="left:170px;top:254px;width:91px;height:17px;border-top:1px solid #fff;border-left:1px solid #fff"></div>
<div class="a" style="left:261px;top:254px;width:1px;height:17px;background:#000"></div>
<div class="hdr ar" style="left:262px;top:254px;width:64px;height:17px;">Grad</div>
<div class="a" style="left:262px;top:254px;width:64px;height:17px;border-top:1px solid #fff;border-left:1px solid #fff"></div>
<div class="a" style="left:326px;top:254px;width:1px;height:17px;background:#000"></div>
<div class="a" style="left:48px;top:272px;width:400px;height:72px;background:#fff"></div>
<div class="a" style="left:29px;top:272px;width:18px;height:17px;background:#d4d0c8;border-top:1px solid #fff;border-left:1px solid #fff"></div>
<div class="a" style="left:29px;top:289px;width:18px;height:1px;background:#000"></div>
<div class="a" style="left:48px;top:289px;width:400px;height:1px;background:#c0c0c0"></div>
<div class="a ar" style="left:51px;top:274px;width:102px;overflow:hidden;white-space:nowrap;letter-spacing:0px">Bogenschießen</div>
<div class="a" style="left:169px;top:272px;width:1px;height:18px;background:#c0c0c0"></div>
<div class="a ar" style="left:173px;top:274px;width:70px;overflow:hidden;white-space:nowrap;letter-spacing:0px">erlernte Beruf</div>
<div class="a" style="left:261px;top:272px;width:1px;height:18px;background:#c0c0c0"></div>
<div class="a ar" style="left:265px;top:274px;width:60px;overflow:hidden;white-space:nowrap;letter-spacing:0.2px">6-Experte</div>
<div class="a" style="left:326px;top:272px;width:1px;height:18px;background:#c0c0c0"></div>
<svg style="left:36px;top:274px" width="12" height="12"><polygon points="0,0 6,6.0 0,12" fill="#000"/></svg>
<div class="a" style="left:29px;top:290px;width:18px;height:17px;background:#d4d0c8;border-top:1px solid #fff;border-left:1px solid #fff"></div>
<div class="a" style="left:29px;top:307px;width:18px;height:1px;background:#000"></div>
<div class="a" style="left:48px;top:307px;width:400px;height:1px;background:#c0c0c0"></div>
<div class="a ar" style="left:51px;top:292px;width:102px;overflow:hidden;white-space:nowrap;letter-spacing:0px">bewaffneter Kampf</div>
<div class="a" style="left:169px;top:290px;width:1px;height:18px;background:#c0c0c0"></div>
<div class="a ar" style="left:173px;top:292px;width:70px;overflow:hidden;white-space:nowrap;letter-spacing:0px">Erfahrung</div>
<div class="a" style="left:261px;top:290px;width:1px;height:18px;background:#c0c0c0"></div>
<div class="a ar" style="left:265px;top:292px;width:60px;overflow:hidden;white-space:nowrap;letter-spacing:0.2px">6-Experte</div>
<div class="a" style="left:326px;top:290px;width:1px;height:18px;background:#c0c0c0"></div>
<div class="a" style="left:29px;top:308px;width:18px;height:17px;background:#d4d0c8;border-top:1px solid #fff;border-left:1px solid #fff"></div>
<div class="a" style="left:29px;top:325px;width:18px;height:1px;background:#000"></div>
<div class="a" style="left:48px;top:325px;width:400px;height:1px;background:#c0c0c0"></div>
<div class="a ar" style="left:51px;top:310px;width:102px;overflow:hidden;white-space:nowrap;letter-spacing:0px">Schwertkampf</div>
<div class="a" style="left:169px;top:308px;width:1px;height:18px;background:#c0c0c0"></div>
<div class="a ar" style="left:173px;top:310px;width:70px;overflow:hidden;white-space:nowrap;letter-spacing:0px">Erfahrung</div>
<div class="a" style="left:261px;top:308px;width:1px;height:18px;background:#c0c0c0"></div>
<div class="a ar" style="left:265px;top:310px;width:60px;overflow:hidden;white-space:nowrap;letter-spacing:0.2px">4-erfahren</div>
<div class="a" style="left:326px;top:308px;width:1px;height:18px;background:#c0c0c0"></div>
<div class="a" style="left:29px;top:326px;width:18px;height:17px;background:#d4d0c8;border-top:1px solid #fff;border-left:1px solid #fff"></div>
<div class="a" style="left:29px;top:343px;width:18px;height:1px;background:#000"></div>
<div class="a" style="left:48px;top:343px;width:400px;height:1px;background:#c0c0c0"></div>
<div class="a" style="left:169px;top:326px;width:1px;height:18px;background:#c0c0c0"></div>
<div class="a" style="left:261px;top:326px;width:1px;height:18px;background:#c0c0c0"></div>
<div class="a" style="left:326px;top:326px;width:1px;height:18px;background:#c0c0c0"></div>
<svg style="left:34px;top:330px" width="9" height="9" viewBox="0 0 9 9"><path d="M4.5 0V9M0 4.5H9M1.3 1.3L7.7 7.7M7.7 1.3L1.3 7.7" stroke="#000" stroke-width="1"/></svg>
<div class="a" style="left:29px;top:510px;width:400px;height:18px;background:#d4d0c8"></div>
<div class="t" style="left:34px;top:514px;letter-spacing:0.1px">Datensatz:</div>
<div class="nbtn" style="left:93px;top:512px;width:20px;height:15px;"></div>
<div class="a" style="left:98px;top:516px;width:2px;height:7px;background:#000"></div>
<svg style="left:101px;top:516px" width="5" height="7"><polygon points="5,0 0.5,3.5 5,7" fill="#000"/></svg>
<div class="nbtn" style="left:113px;top:512px;width:20px;height:15px;"></div>
<svg style="left:121px;top:517px" width="7" height="7"><polygon points="4,0 0,3.5 4,7" fill="#fff"/></svg>
<svg style="left:120px;top:516px" width="7" height="7"><polygon points="4,0 0,3.5 4,7" fill="#808080"/></svg>
<div class="sunk" style="left:137px;top:511px;width:64px;height:16px;"><div class="t" style="right:3px;top:1px;letter-spacing:0">1</div></div>
<div class="nbtn" style="left:205px;top:512px;width:20px;height:15px;"></div>
<svg style="left:212px;top:516px" width="7" height="7"><polygon points="0,0 4,3.5 0,7" fill="#000"/></svg>
<div class="nbtn" style="left:225px;top:512px;width:20px;height:15px;"></div>
<svg style="left:230px;top:516px" width="7" height="7"><polygon points="0,0 4,3.5 0,7" fill="#000"/></svg>
<div class="a" style="left:236px;top:516px;width:2px;height:7px;background:#000"></div>
<div class="nbtn" style="left:245px;top:512px;width:20px;height:15px;"></div>
<svg style="left:248px;top:516px" width="7" height="7"><polygon points="0,0 4,3.5 0,7" fill="#000"/></svg>
<svg style="left:254px;top:516px" width="7" height="7" viewBox="0 0 7 7"><path d="M3.5 0V7M0 3.5H7M1 1L6 6M6 1L1 6" stroke="#000" stroke-width="1"/></svg>
<div class="t" style="left:271px;top:514px;word-spacing:2px;letter-spacing:0">von 3</div>
<div class="a" style="left:28px;top:538px;width:310px;height:80px;border:1px solid;border-color:#808080 #fff #fff #808080;background:#848284"></div>
<div class="a" style="left:29px;top:539px;width:308px;height:78px;border:1px solid;border-color:#000 #d4d0c8 #d4d0c8 #000"></div>
<div class="a" style="left:30px;top:540px;width:18px;height:17px;background:#d4d0c8;border-top:1px solid #fff;border-left:1px solid #fff"></div>
<div class="a" style="left:48px;top:540px;width:1px;height:54px;background:#000"></div>
<div class="a" style="left:30px;top:557px;width:400px;height:1px;background:#000"></div>
<div class="hdr ar" style="left:49px;top:540px;width:154px;height:17px;">Gruppe</div>
<div class="a" style="left:49px;top:540px;width:154px;height:17px;border-top:1px solid #fff;border-left:1px solid #fff"></div>
<div class="a" style="left:203px;top:540px;width:1px;height:17px;background:#000"></div>
<div class="hdr ar" style="left:204px;top:540px;width:152px;height:17px;">Position</div>
<div class="a" style="left:204px;top:540px;width:152px;height:17px;border-top:1px solid #fff;border-left:1px solid #fff"></div>
<div class="a" style="left:356px;top:540px;width:1px;height:17px;background:#000"></div>
<div class="a" style="left:49px;top:558px;width:400px;height:36px;background:#fff"></div>
<div class="a" style="left:30px;top:558px;width:18px;height:17px;background:#d4d0c8;border-top:1px solid #fff;border-left:1px solid #fff"></div>
<div class="a" style="left:30px;top:575px;width:18px;height:1px;background:#000"></div>
<div class="a" style="left:49px;top:575px;width:400px;height:1px;background:#c0c0c0"></div>
<div class="a ar" style="left:52px;top:560px;width:150px;overflow:hidden;white-space:nowrap;letter-spacing:0px">Alleroog: Söldner</div>
<div class="a" style="left:203px;top:558px;width:1px;height:18px;background:#c0c0c0"></div>
<div class="a" style="left:356px;top:558px;width:1px;height:18px;background:#c0c0c0"></div>
<svg style="left:37px;top:560px" width="12" height="12"><polygon points="0,0 6,6.0 0,12" fill="#000"/></svg>
<div class="a" style="left:30px;top:576px;width:18px;height:17px;background:#d4d0c8;border-top:1px solid #fff;border-left:1px solid #fff"></div>
<div class="a" style="left:30px;top:593px;width:18px;height:1px;background:#000"></div>
<div class="a" style="left:49px;top:593px;width:400px;height:1px;background:#c0c0c0"></div>
<div class="a" style="left:203px;top:576px;width:1px;height:18px;background:#c0c0c0"></div>
<div class="a" style="left:356px;top:576px;width:1px;height:18px;background:#c0c0c0"></div>
<svg style="left:35px;top:580px" width="9" height="9" viewBox="0 0 9 9"><path d="M4.5 0V9M0 4.5H9M1.3 1.3L7.7 7.7M7.7 1.3L1.3 7.7" stroke="#000" stroke-width="1"/></svg>
</div>
<div class="chk" style="left:1006px;top:97px;width:16px;height:606px;"></div>
<div class="sbtn" style="left:1006px;top:97px;width:16px;height:16px;"></div>
<svg style="left:1010px;top:103px" width="7" height="7"><polygon points="0,4 7,4 3.5,0" fill="#000"/></svg>
<div class="sbtn" style="left:1006px;top:113px;width:16px;height:443px;"></div>
<div class="sbtn" style="left:1006px;top:687px;width:16px;height:16px;"></div>
<svg style="left:1010px;top:693px" width="7" height="7"><polygon points="0,0 7,0 3.5,4" fill="#000"/></svg>
<svg style="left:798px;top:298px" width="13" height="22" viewBox="0 0 13 22"><path d="M0.5 0.5V16.5L4.2 13L7.3 20.2L9.8 19.2L6.8 12H11.8Z" fill="#fff" stroke="#000" stroke-width="1"/></svg>
<div class="a" style="left:0px;top:702px;width:1024px;height:18px;background:#d4d0c8"></div>
<div class="a" style="left:0px;top:702px;width:1px;height:17px;background:#808080"></div>
<div class="a" style="left:1px;top:702px;width:1px;height:17px;background:#404040"></div>
<div class="a" style="left:2px;top:702px;width:400px;height:18px;background:#d4d0c8"></div>
<div class="t" style="left:7px;top:706px;letter-spacing:0.1px">Datensatz:</div>
<div class="nbtn" style="left:66px;top:704px;width:20px;height:15px;"></div>
<div class="a" style="left:71px;top:708px;width:2px;height:7px;background:#000"></div>
<svg style="left:74px;top:708px" width="5" height="7"><polygon points="5,0 0.5,3.5 5,7" fill="#000"/></svg>
<div class="nbtn" style="left:86px;top:704px;width:20px;height:15px;"></div>
<svg style="left:94px;top:709px" width="7" height="7"><polygon points="4,0 0,3.5 4,7" fill="#fff"/></svg>
<svg style="left:93px;top:708px" width="7" height="7"><polygon points="4,0 0,3.5 4,7" fill="#808080"/></svg>
<div class="sunk" style="left:110px;top:703px;width:64px;height:16px;"><div class="t" style="right:3px;top:1px;letter-spacing:0">1</div></div>
<div class="nbtn" style="left:178px;top:704px;width:20px;height:15px;"></div>
<svg style="left:185px;top:708px" width="7" height="7"><polygon points="0,0 4,3.5 0,7" fill="#000"/></svg>
<div class="nbtn" style="left:198px;top:704px;width:20px;height:15px;"></div>
<svg style="left:203px;top:708px" width="7" height="7"><polygon points="0,0 4,3.5 0,7" fill="#000"/></svg>
<div class="a" style="left:209px;top:708px;width:2px;height:7px;background:#000"></div>
<div class="nbtn" style="left:218px;top:704px;width:20px;height:15px;"></div>
<svg style="left:221px;top:708px" width="7" height="7"><polygon points="0,0 4,3.5 0,7" fill="#000"/></svg>
<svg style="left:227px;top:708px" width="7" height="7" viewBox="0 0 7 7"><path d="M3.5 0V7M0 3.5H7M1 1L6 6M6 1L1 6" stroke="#000" stroke-width="1"/></svg>
<div class="t" style="left:244px;top:706px;word-spacing:2px;letter-spacing:0">von 26</div>
<div class="chk" style="left:398px;top:703px;width:608px;height:16px;"></div>
<div class="sbtn" style="left:398px;top:703px;width:16px;height:16px;"></div>
<svg style="left:403px;top:707px" width="7" height="7"><polygon points="4,0 0,3.5 4,7" fill="#000"/></svg>
<div class="sbtn" style="left:414px;top:703px;width:465px;height:16px;"></div>
<div class="sbtn" style="left:990px;top:703px;width:16px;height:16px;"></div>
<svg style="left:996px;top:707px" width="7" height="7"><polygon points="0,0 4,3.5 0,7" fill="#000"/></svg>
<div class="a" style="left:1006px;top:703px;width:18px;height:17px;background:#d4d0c8"></div>
<div class="a" style="left:0px;top:720px;width:1024px;height:1px;background:#fff"></div>
<div class="a" style="left:0px;top:723px;width:776px;height:17px;border:1px solid #ebe9e4;border-left:none"></div>
<div class="t" style="left:10px;top:725px;letter-spacing:-0.15px">Formularansicht</div>
<div class="a" style="left:795px;top:723px;width:27px;height:17px;border:1px solid #ebe9e4"></div>
<div class="a" style="left:825px;top:723px;width:27px;height:17px;border:1px solid #ebe9e4"></div>
<div class="a" style="left:854px;top:723px;width:28px;height:17px;border:1px solid #ebe9e4"></div>
<div class="a" style="left:884px;top:723px;width:39px;height:17px;border:1px solid #ebe9e4"></div>
<div class="a" style="left:925px;top:723px;width:32px;height:17px;border:1px solid #ebe9e4"></div>
<div class="a" style="left:959px;top:723px;width:18px;height:17px;border:1px solid #ebe9e4"></div>
<div class="a" style="left:980px;top:723px;width:17px;height:17px;border:1px solid #ebe9e4"></div>
<div class="a" style="left:999px;top:723px;width:18px;height:17px;border:1px solid #ebe9e4"></div>
<div class="a" style="left:0px;top:741px;width:1024px;height:1px;background:#f4f3f0"></div>
</div></body></html>
